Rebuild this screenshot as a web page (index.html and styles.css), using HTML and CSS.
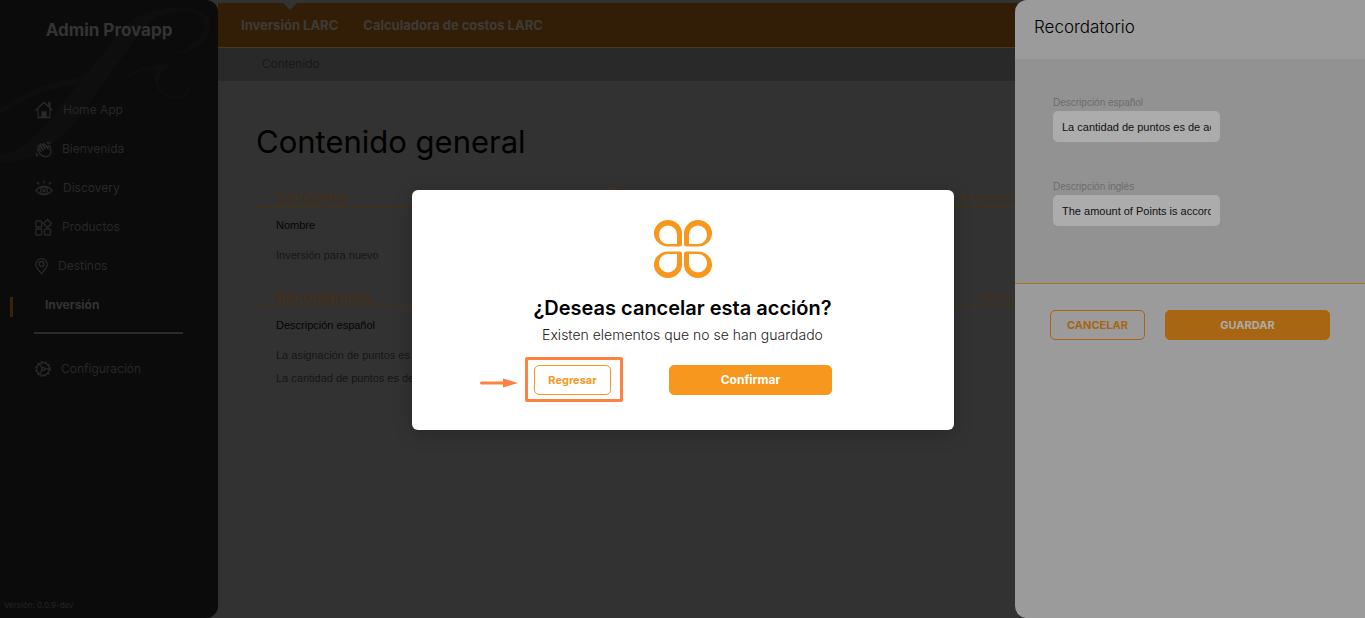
FILE: index.html
```html
<!DOCTYPE html>
<html lang="es">
<head>
<meta charset="utf-8">
<title>Admin Provapp</title>
<link rel="stylesheet" href="styles.css">
</head>
<body>
<div class="app">
  <aside class="sidebar">
    <svg class="swirl" viewBox="0 0 218 170" aria-hidden="true">
      <path d="M0 109Q38 82 85 76L75 84Q34 91 0 115ZM0 154C38 151 62 98 90 70C113 43 123 18 151 11C178 4 208 6 210 22C211 41 192 54 177 53C195 46 209 31 203 18C195 7 159 10 146 26C120 58 93 101 71 127C47 153 25 164 0 162ZM119 80C138 69 151 62 171 65C155 72 155 91 170 95C180 98 189 94 187 87C194 89 187 99 178 99C157 98 149 80 158 70C142 70 131 76 119 80Z"/>
    </svg>
    <h1 class="brand">Admin Provapp</h1>
    <nav class="menu">
      <a class="menu-item" href="#"><svg width="18" height="18" viewBox="0 0 18 18"><path d="M.5 9.500 9 1.500l8.500 8M3 8v8.500h12V8M13.500 5V2H15v4.500"/><path class="solid" d="M7 11h4v5H7z"/></svg>Home App</a>
      <a class="menu-item" href="#"><svg width="17" height="18" viewBox="0 0 17 18"><path d="M5 14 2.500 10Q2.500 8.500 4 9L6.500 12 3 7Q3 5.500 4.500 6L8.500 10.500 5 5Q5.500 3 7 4.500L10.500 9 8 4.500Q9 3 10 4.500L13 8.500 13 6Q14.500 5 15 7L16 11Q16 16 11.500 16.500 7.500 17 5 14ZM12 2l2 2M14.500 1.500l1 2M1 13l2 3M1 15.500h2"/></svg>Bienvenida</a>
      <a class="menu-item" href="#"><svg width="18" height="18" viewBox="0 0 18 18"><path d="M.8 11.500Q9 3 17.200 11.500 9 20 .8 11.500ZM9 1.500v3M2 3l2 2.500M16 3l-2 2.500"/><circle cx="9" cy="11.500" r="3.500"/><circle cx="9" cy="11.500" r="1.200"/></svg>Discovery</a>
      <a class="menu-item" href="#"><svg width="17" height="18" viewBox="0 0 17 18"><rect x=".8" y="3" width="6" height="6" rx="1"/><rect x=".8" y="11" width="6" height="6" rx="1"/><rect x="9.500" y="11" width="6" height="6" rx="1"/><path d="m12.500 1.500 4 4-4 4-4-4z"/></svg>Productos</a>
      <a class="menu-item" href="#"><svg width="13" height="18" viewBox="0 0 13 18"><path d="M6.500 16.500Q.7 10.500.7 7.500a5.800 5.800 0 0 1 11.600 0Q12.300 10.500 6.500 16.500Z"/><circle cx="6.500" cy="7" r="2.500"/></svg>Destinos</a>
      <a class="menu-item current" href="#" aria-current="page">Inversión</a>
    </nav>
    <hr class="menu-rule">
    <a class="menu-item" href="#"><svg width="16" height="18" viewBox="0 0 16 18"><circle cx="8" cy="9" r="6.300"/><circle class="teeth" cx="8" cy="9" r="7.300"/><circle cx="8" cy="9" r="1.500"/><path d="M9.500 9H14M7 8 4.500 4M7 10l-2.500 4"/></svg>Configuración</a>
    <p class="version">Versión: 0.0.9-dev</p>
  </aside>

  <main class="main">
    <nav class="tabs">
      <a class="tab active" href="#">Inversión LARC</a>
      <a class="tab" href="#">Calculadora de costos LARC</a>
    </nav>
    <div class="subnav"><a href="#">Contenido</a></div>
    <div class="content">
      <h2 class="page-title">Contenido general</h2>
      <section class="block">
        <header class="block-head">
          <h3>Secciones</h3>
          <button class="add" aria-label="Agregar"></button>
          <span class="count">1/5 secciones</span>
        </header>
        <p class="column-name">Nombre</p>
        <p class="row">Inversión para nuevo</p>
      </section>
      <section class="block">
        <header class="block-head">
          <h3>Recordatorios</h3>
          <span class="count">2/5 ítems</span>
        </header>
        <p class="column-name">Descripción español</p>
        <p class="row">La asignación de puntos es</p>
        <p class="row">La cantidad de puntos es de acuerdo</p>
      </section>
    </div>
  </main>

  <aside class="drawer">
    <h2 class="drawer-title">Recordatorio</h2>
    <form class="drawer-form">
      <label for="es">Descripción español</label>
      <input id="es" type="text" value="La cantidad de puntos es de acuerdo">
      <label for="en">Descripción inglés</label>
      <input id="en" type="text" value="The amount of Points is according">
    </form>
    <div class="drawer-actions">
      <button class="btn dim-outline">CANCELAR</button>
      <button class="btn dim-fill">GUARDAR</button>
    </div>
  </aside>

  <div class="overlay">
    <div class="modal" role="dialog" aria-modal="true" aria-labelledby="ask">
      <svg class="logo" width="60" height="60" viewBox="0 0 60 60" aria-hidden="true">
        <g id="half"><path fill-rule="evenodd" d="M15 1H15A14 13.500 0 0 1 29 14.500V25Q29 27.500 26.500 27.500H15A14 13.200 0 0 1 15 1ZM15 6.500A9 9 0 0 0 6 15.500C6 21 10 25 15 25H24V15.500A9 9 0 0 0 15 6.500Z"/><path fill-rule="evenodd" d="M45 1A14 13.200 0 0 1 45 27.500H33.500Q31 27.500 31 25V14.500A14 13.500 0 0 1 45 1ZM45 6.500A9 9 0 0 0 36 15.500V25H45C50 25 54 21 54 15.500A9 9 0 0 0 45 6.500Z"/></g>
        <use href="#half" transform="matrix(1 0 0 -1 0 60)"/>
      </svg>
      <h2 class="ask" id="ask">¿Deseas cancelar esta acción?</h2>
      <p class="detail">Existen elementos que no se han guardado</p>
      <div class="modal-actions">
        <div class="marked">
          <button class="btn outline">Regresar</button>
          <svg class="arrow" width="40" height="10" viewBox="0 0 40 10" aria-hidden="true"><path d="M2 3.500H24V.5L39 5 24 9.500V6.500H2Q0 5 2 3.500Z"/></svg>
        </div>
        <button class="btn fill">Confirmar</button>
      </div>
    </div>
  </div>
</div>
</body>
</html>
```
FILE: styles.css
```css
* { box-sizing: border-box; }
body, h1, h2, h3, p { margin: 0; }
body {
  background: #323232;
  color: #000;
  font-family: Inter, "Noto Sans", sans-serif;
}
a { color: inherit; text-decoration: none; }
button { font-family: inherit; padding: 0; }
.app { display: flex; min-height: 100vh; position: relative; overflow: hidden; }

.sidebar {
  position: relative;
  display: flex;
  flex-direction: column;
  width: 218px;
  flex: none;
  background: #0b0b0b;
  border-radius: 0 12px 12px 0;
  color: #282828;
}
.swirl { position: absolute; top: 0; left: 0; width: 218px; height: 170px; fill: #0e0e0e; }
.brand {
  position: relative;
  padding: 18px 0 48px;
  text-align: center;
  font-size: 17px;
  line-height: 24px;
  font-weight: 700;
  color: #343434;
}
.menu { position: relative; }
.menu-item {
  display: flex;
  align-items: center;
  gap: 10px;
  height: 39px;
  padding-left: 35px;
  font-size: 12px;
}
.menu-item svg { fill: none; stroke: #292929; stroke-width: 1.3; }
.menu-item .solid { fill: #292929; }
.menu-item .teeth { stroke-dasharray: 2 2; }
.menu-item.current { position: relative; padding-left: 45px; font-weight: 700; color: #343434; }
.menu-item.current::before {
  content: "";
  position: absolute;
  left: 10px;
  bottom: 7px;
  width: 3px;
  height: 20px;
  background: #3a2206;
}
.menu-rule { width: 149px; margin: 8px 0 15px 34px; border: 0; border-top: 2px solid #2b2b2b; }
.version { margin: auto 0 6px 4px; font-size: 8px; line-height: 14px; color: #252525; }

.main { flex: 1; min-width: 0; padding-top: 3px; }
.tabs {
  display: flex;
  gap: 25px;
  height: 45px;
  padding: 0 23px;
  background: #321e07;
  border-bottom: 1px solid #493a28;
  color: #3e3b37;
  font-size: 13px;
  line-height: 44px;
  font-weight: 700;
}
.tab { position: relative; }
.tab.active::before {
  content: "";
  position: absolute;
  left: 50%;
  top: 0;
  margin-left: -7px;
  border: 7px solid transparent;
  border-top-color: #323232;
  border-bottom: 0;
}
.subnav { height: 33px; padding-left: 44px; background: #292929; color: #141414; font-size: 12px; line-height: 32px; font-weight: 300; }
.content { padding: 40px 38px; max-width: 862px; }
.page-title { font-size: 31px; line-height: 42px; font-weight: 400; margin-bottom: 22px; }
.block { margin-bottom: 18px; font-family: "Liberation Sans", Arial, sans-serif; font-size: 11px; color: #151515; }
.block-head {
  display: flex;
  align-items: center;
  justify-content: space-between;
  height: 23px;
  margin-bottom: 6px;
  padding: 3px 20px 0;
  border-bottom: 1px solid #4a300c;
  color: #4a2e0c;
  font-family: Inter, "Noto Sans", sans-serif;
}
.block-head h3 { font-size: 15px; line-height: 19px; font-weight: 300; }
.add {
  align-self: flex-start;
  width: 12px;
  height: 12px;
  margin: 0 auto 0 258px;
  border: 1px solid #5a360a;
  border-radius: 50%;
  background: none;
}
.count { font-size: 10px; font-weight: 300; }
.column-name { padding: 0 20px; line-height: 23px; margin-bottom: 7px; color: #050505; }
.row { padding: 0 20px; line-height: 23px; }

.drawer {
  position: absolute;
  top: 0;
  right: 0;
  bottom: 0;
  width: 350px;
  background: #9b9b9b;
  border-radius: 12px 0 0 12px;
}
.drawer-title { padding: 15px 19px 20px; font-size: 17px; line-height: 24px; font-weight: 300; }
.drawer-form {
  display: flex;
  flex-direction: column;
  align-items: flex-start;
  padding: 36px 38px 20px;
  background: #929292;
  border-bottom: 1px solid #a8741f;
  font-family: "Liberation Sans", Arial, sans-serif;
}
.drawer-form label { font-size: 10px; line-height: 16px; color: #6c6c6c; }
.drawer-form input {
  flex: none;
  width: 167px;
  height: 31px;
  margin-bottom: 37px;
  padding: 0 9px;
  border: 0;
  border-radius: 5px;
  background: #acacac;
  font: 11px "Liberation Sans", Arial, sans-serif;
  color: #111;
}
.drawer-actions { display: flex; gap: 20px; padding: 26px 35px; }
.btn { height: 30px; border: 1px solid #f8971d; border-radius: 5px; font-size: 11px; font-weight: 700; }
.dim-outline { width: 95px; border-color: #a86512; background: none; color: #a86512; }
.dim-fill { flex: 1; border-color: #a86512; background: #a86512; color: #acacac; }

.overlay { position: absolute; inset: 0; display: grid; place-items: center; padding-top: 2px; }
.modal {
  display: flex;
  flex-direction: column;
  align-items: center;
  width: 542px;
  padding: 29px 20px 28px;
  background: #fff;
  border-radius: 6px;
  box-shadow: 0 4px 20px rgba(0, 0, 0, .2);
}
.logo { fill: #f8971d; }
.ask { margin-top: 16px; font-size: 20px; line-height: 26px; font-weight: 600; }
.detail { margin-top: 4px; font-size: 14px; line-height: 20px; font-weight: 300; color: #222; }
.modal-actions { display: flex; align-items: center; gap: 46px; margin: 12px 8px 0 0; }
.marked { position: relative; display: flex; padding: 5px 9px 4px 6px; border: 3px solid #ff8142; border-radius: 2px; }
.arrow { position: absolute; right: 101px; top: 18px; fill: #ff8142; }
.outline { width: 77px; background: #fff; color: #f8971d; }
.fill { width: 163px; background: #f8971d; color: #fff; font-size: 12px; }
```
